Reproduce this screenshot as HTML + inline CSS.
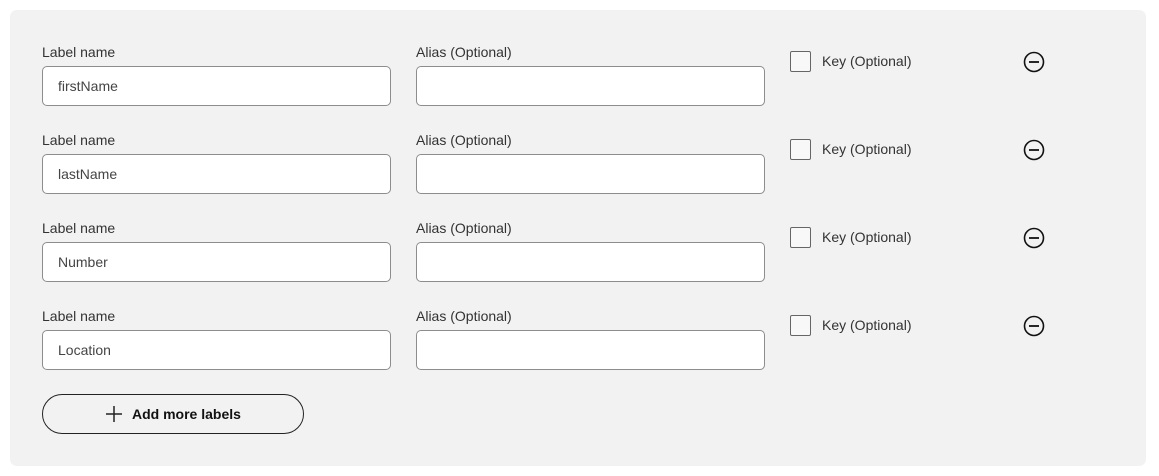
<!DOCTYPE html>
<html><head><style>
body{margin:0;background:#fff;font-family:"Liberation Sans",sans-serif;width:1159px;height:476px;overflow:hidden;position:relative}
.panel{position:absolute;left:10px;top:10px;width:1136px;height:456px;background:#f2f2f2;border-radius:7px}
.lbl{position:absolute;font-size:14px;color:#333;line-height:16px}
.inp{position:absolute;width:347px;height:38px;background:#fff;border:1px solid #8d8d8d;border-radius:5px;box-sizing:content-box}
.inp span{position:absolute;left:15px;top:11px;font-size:14px;color:#444}
.cb{position:absolute;width:19px;height:19px;border:1.5px solid #666;border-radius:2px;background:#f8f8f8}
.min{position:absolute}
.btn{position:absolute;left:42px;top:394px;width:260px;height:38px;border:1px solid #222;border-radius:20px;font-size:14px;font-weight:bold;color:#111}
</style></head><body>
<div class="panel"></div>
<script>
const names=["firstName","lastName","Number","Location"];
let h="";
names.forEach((n,i)=>{const y=i*88;
h+=`<div class="lbl" style="left:42px;top:${44+y}px">Label name</div>
<div class="lbl" style="left:416px;top:${44+y}px">Alias (Optional)</div>
<div class="inp" style="left:42px;top:${66+y}px"><span>${n}</span></div>
<div class="inp" style="left:416px;top:${66+y}px"></div>
<div class="cb" style="left:790px;top:${51+y}px"></div>
<div class="lbl" style="left:822px;top:${53+y}px">Key (Optional)</div>
<svg class="min" style="left:1023px;top:${51+y}px" width="22" height="22"><circle cx="11" cy="11" r="9.5" fill="none" stroke="#111" stroke-width="1.6"/><line x1="6" y1="11" x2="16" y2="11" stroke="#111" stroke-width="1.8"/></svg>`;});
document.write(h);
</script>
<div class="btn"><svg style="position:absolute;left:62px;top:10px" width="18" height="18"><path d="M9 1V17M1 9H17" stroke="#222" stroke-width="1.5"/></svg><span style="position:absolute;left:89px;top:11px">Add more labels</span></div>
</body></html>
